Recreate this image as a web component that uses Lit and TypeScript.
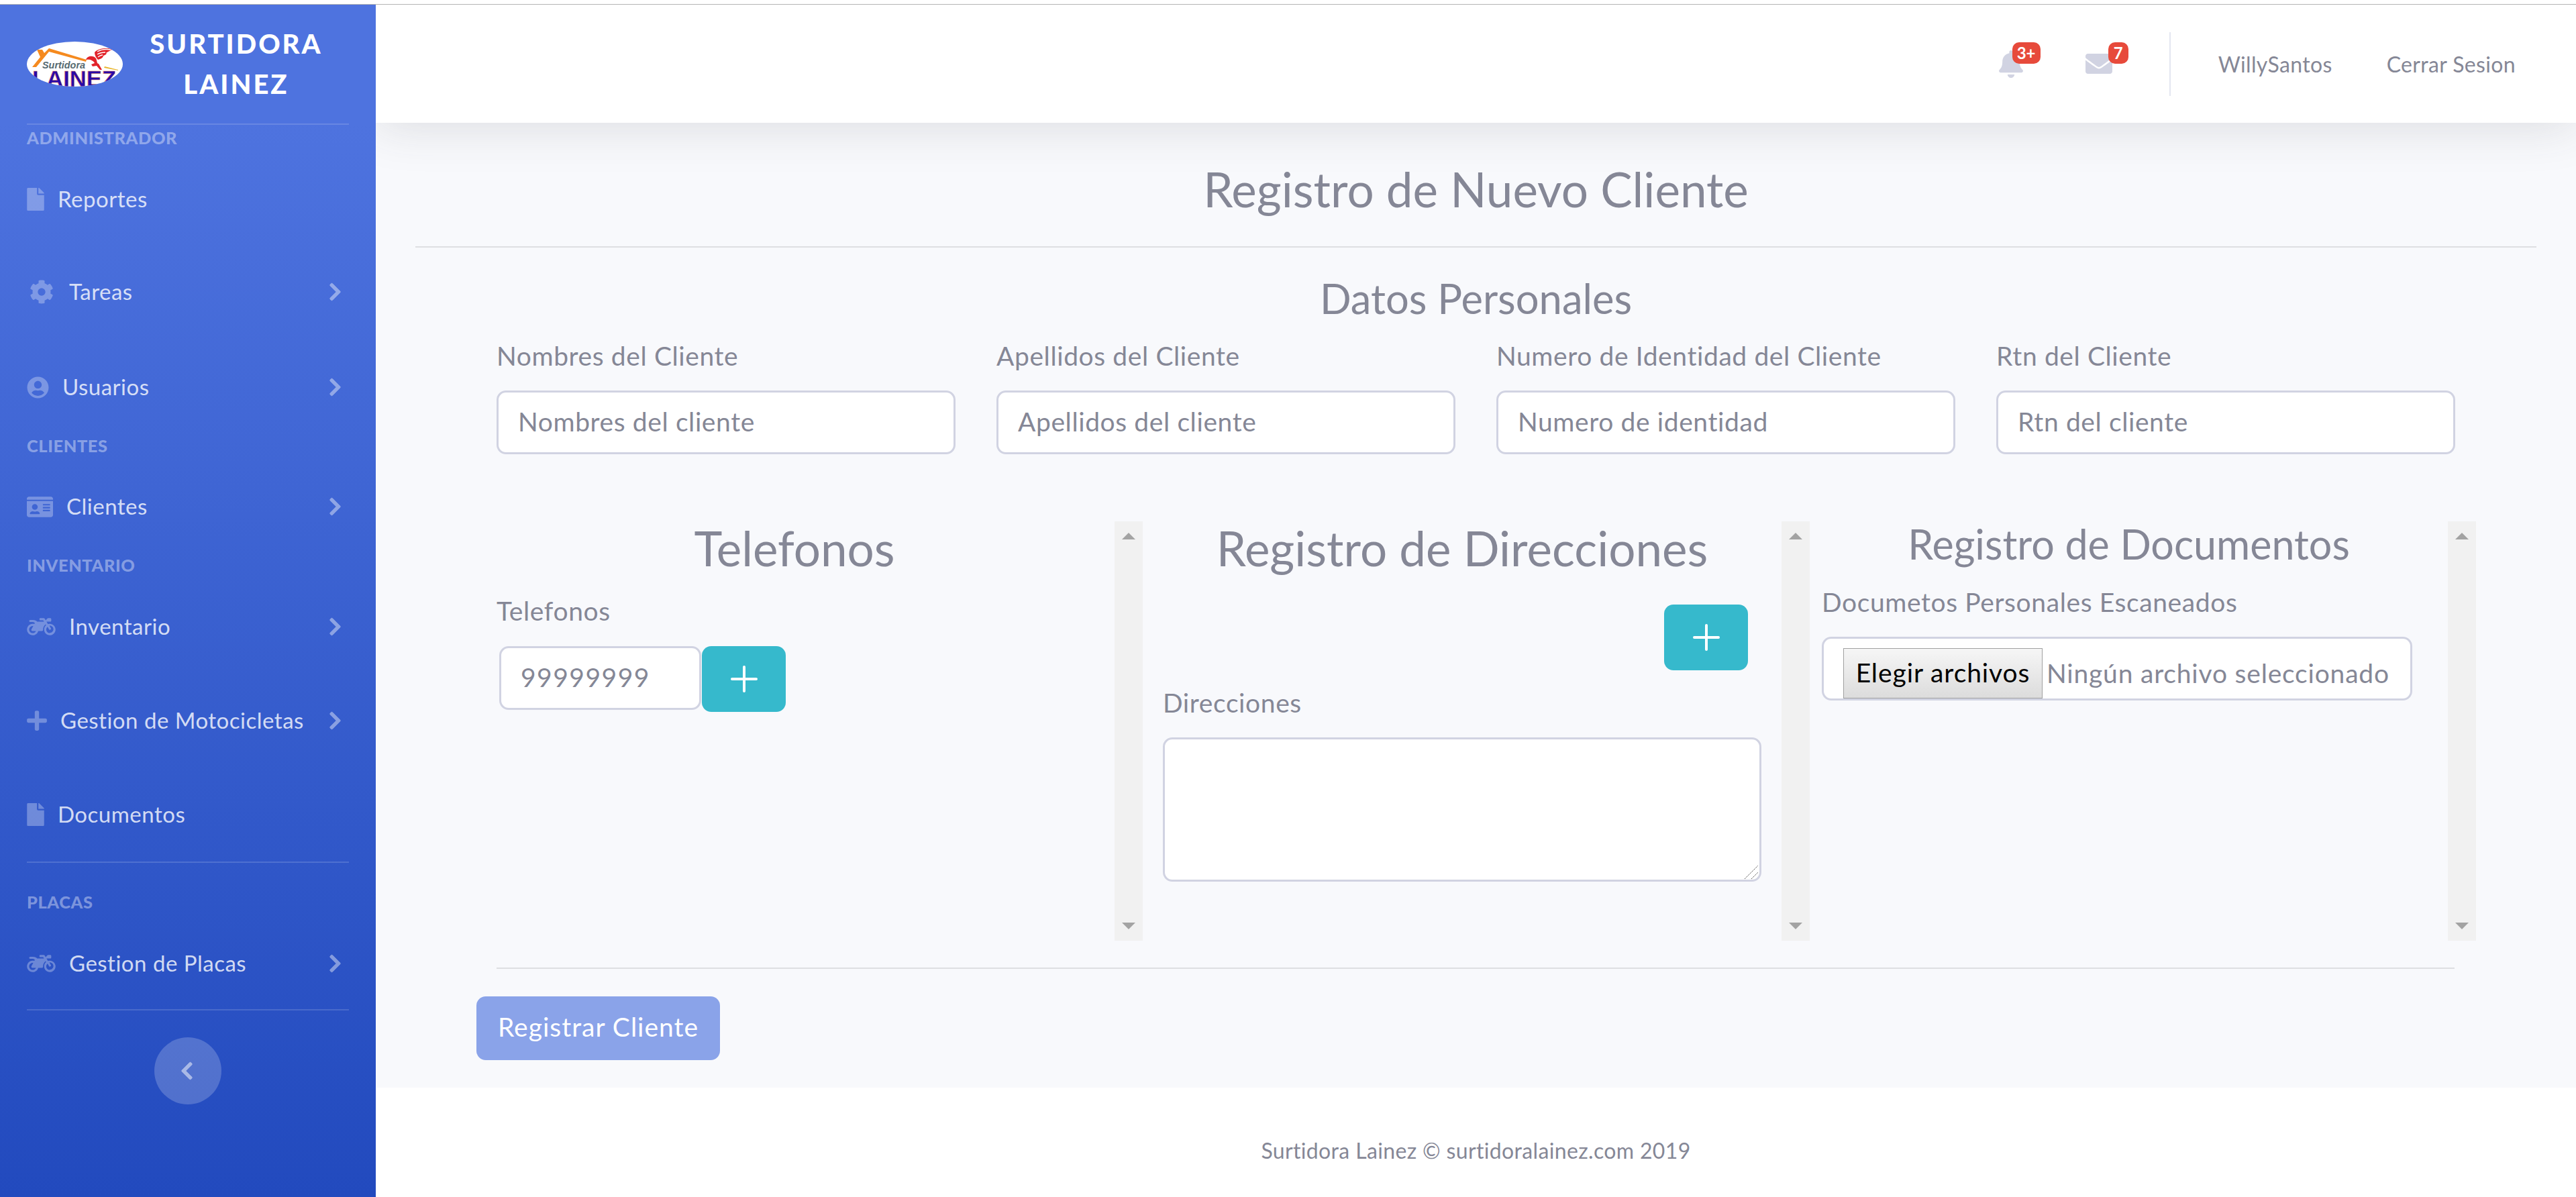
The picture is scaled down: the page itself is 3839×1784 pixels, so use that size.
import { LitElement, css, html, svg } from 'lit'
import { customElement } from 'lit/decorators.js'

const ICONS: Record<string, { box: string; d: string }> = {
	file: { box: '0 0 384 512', d: 'M224 136V0H24C10.7 0 0 10.7 0 24v464c0 13.3 10.7 24 24 24h336c13.3 0 24-10.7 24-24V160H248c-13.2 0-24-10.8-24-24zm160-14.1v6.1H256V0h6.1c6.4 0 12.5 2.5 17 7l97.9 98c4.5 4.5 7 10.6 7 16.9z' },
	cog: { box: '0 0 512 512', d: 'M487.4 315.7l-42.6-24.6c4.3-23.2 4.3-47 0-70.2l42.6-24.6c4.9-2.8 7.1-8.6 5.5-14-11.1-35.6-30-67.8-54.7-94.6-3.8-4.1-10-5.1-14.8-2.3L380.8 110c-17.9-15.4-38.5-27.3-60.8-35.1V25.8c0-5.6-3.9-10.5-9.4-11.7-36.7-8.2-74.3-7.8-109.2 0-5.5 1.2-9.4 6.1-9.4 11.7V75c-22.2 7.9-42.8 19.8-60.8 35.1L88.7 85.5c-4.9-2.8-11-1.9-14.8 2.3-24.7 26.7-43.6 58.9-54.7 94.6-1.7 5.4.6 11.2 5.5 14L67.3 221c-4.3 23.2-4.3 47 0 70.2l-42.6 24.6c-4.9 2.8-7.1 8.6-5.5 14 11.1 35.6 30 67.8 54.7 94.6 3.8 4.1 10 5.1 14.8 2.3l42.6-24.6c17.9 15.4 38.5 27.3 60.8 35.1v49.2c0 5.6 3.9 10.5 9.4 11.7 36.7 8.2 74.3 7.8 109.2 0 5.5-1.2 9.4-6.1 9.4-11.7v-49.2c22.2-7.9 42.8-19.8 60.8-35.1l42.6 24.6c4.9 2.8 11 1.9 14.8-2.3 24.7-26.7 43.6-58.9 54.7-94.6 1.5-5.5-.7-11.3-5.6-14.1zM256 336c-44.1 0-80-35.9-80-80s35.9-80 80-80 80 35.9 80 80-35.9 80-80 80z' },
	user: { box: '0 0 496 512', d: 'M248 8C111 8 0 119 0 256s111 248 248 248 248-111 248-248S385 8 248 8zm0 96c48.6 0 88 39.4 88 88s-39.4 88-88 88-88-39.4-88-88 39.4-88 88-88zm0 344c-58.7 0-111.3-26.6-146.5-68.2 18.8-35.4 55.6-59.8 98.5-59.8 2.4 0 4.8.4 7.1 1.1 13 4.2 26.6 6.9 40.9 6.9 14.3 0 28-2.7 40.9-6.9 2.3-.7 4.7-1.1 7.1-1.1 42.9 0 79.7 24.4 98.5 59.8C359.3 421.4 306.7 448 248 448z' },
	card: { box: '0 0 576 512', d: 'M528 32H48C21.5 32 0 53.5 0 80v16h576V80c0-26.5-21.5-48-48-48zM0 432c0 26.5 21.5 48 48 48h480c26.5 0 48-21.5 48-48V128H0v304zm352-232c0-4.4 3.6-8 8-8h144c4.4 0 8 3.6 8 8v16c0 4.4-3.6 8-8 8H360c-4.4 0-8-3.6-8-8v-16zm0 64c0-4.4 3.6-8 8-8h144c4.4 0 8 3.6 8 8v16c0 4.4-3.6 8-8 8H360c-4.4 0-8-3.6-8-8v-16zm0 64c0-4.4 3.6-8 8-8h144c4.4 0 8 3.6 8 8v16c0 4.4-3.6 8-8 8H360c-4.4 0-8-3.6-8-8v-16zM176 192c35.3 0 64 28.7 64 64s-28.7 64-64 64-64-28.7-64-64 28.7-64 64-64zM67.1 396.2C75.5 370.5 99.6 352 128 352h8.2c12.3 5.1 25.7 8 39.8 8s27.6-2.9 39.8-8h8.2c28.4 0 52.5 18.5 60.9 44.2 3.2 9.9-5.2 19.8-15.6 19.8H82.7c-10.4 0-18.8-10-15.6-19.8z' },
	plus: { box: '0 0 448 512', d: 'M416 208H272V64c0-17.67-14.33-32-32-32h-32c-17.67 0-32 14.33-32 32v144H32c-17.67 0-32 14.33-32 32v32c0 17.67 14.33 32 32 32h144v144c0 17.67 14.33 32 32 32h32c17.67 0 32-14.33 32-32V304h144c17.67 0 32-14.33 32-32v-32c0-17.67-14.33-32-32-32z' },
	moto: { box: '0 0 640 512', d: 'M512.9 192c-14.9-.1-29.1 2.3-42.4 6.9L437.6 144H520c13.3 0 24-10.7 24-24V88c0-13.3-10.7-24-24-24h-45.3c-6.8 0-13.3 2.9-17.8 7.9l-37.5 41.7-22.8-38C392.2 68.4 384.4 64 376 64h-80c-8.8 0-16 7.2-16 16v16c0 8.8 7.2 16 16 16h66.4l19.2 32H227.9c-17.7-23.1-44.9-40-99.9-40H72.5C59 104 47.7 115 48 128.5c.2 13 10.9 23.5 24 23.5h56c24.5 0 38.7 10.9 47.8 24.8l-11.3 20.5c-13-3.9-26.9-5.7-41.3-5.2C55.9 194.5 1.6 249.6 0 317c-1.6 72.1 56.3 131 128 131 59.6 0 109.7-40.8 124-96h84.2c13.7 0 24.6-11.4 24-25.1-2.1-47.1 17.5-93.7 56.2-125l12.5 20.8c-27.6 23.7-45.1 58.9-44.8 98.2.5 69.6 57.2 126.5 126.8 127.1 71.6.7 129.8-57.5 129.2-129.1-.7-69.5-57.6-126.4-127.1-127.9zM128 400c-44.1 0-80-35.9-80-80s35.9-80 80-80c4.2 0 8.4.3 12.5 1L99 316.4c-8.8 16 2.8 35.6 21 35.6h81.3c-12.4 28.2-40.6 48-73.3 48zm384 0c-44.1 0-80-35.9-80-80 0-24.7 11.3-46.8 28.9-61.5l36.3 60.6c4.5 7.6 14.3 10 21.9 5.5l13.7-8.2c7.6-4.5 10-14.3 5.5-21.9l-36.4-60.6c3.6-.5 7.3-.8 11-.8 44.1 0 80 35.9 80 80s-35.9 80-80 80z' },
	chevron: { box: '0 0 320 512', d: 'M285.476 272.971L91.132 467.314c-9.373 9.373-24.569 9.373-33.941 0l-22.667-22.667c-9.357-9.357-9.375-24.522-.04-33.901L188.505 256 34.484 101.255c-9.335-9.379-9.317-24.544.04-33.901l22.667-22.667c9.373-9.373 24.569-9.373 33.941 0L285.475 239.03c9.373 9.372 9.373 24.568.001 33.941z' },
	bell: { box: '0 0 448 512', d: 'M224 512c35.32 0 63.97-28.65 63.97-64H160.03c0 35.35 28.65 64 63.97 64zm215.39-149.71c-19.32-20.76-55.47-51.99-55.47-154.29 0-77.7-54.48-139.9-127.94-155.16V32c0-17.67-14.32-32-31.98-32s-31.98 14.33-31.98 32v20.84C118.56 68.1 64.08 130.3 64.08 208c0 102.3-36.15 133.53-55.47 154.29-6 6.45-8.66 14.16-8.61 21.71.11 16.4 12.98 32 32.1 32h383.8c19.12 0 32-15.6 32.1-32 .05-7.55-2.61-15.27-8.61-21.71z' },
	mail: { box: '0 0 512 512', d: 'M502.3 190.8c3.9-3.1 9.7-.2 9.7 4.7V400c0 26.5-21.5 48-48 48H48c-26.5 0-48-21.5-48-48V195.6c0-5 5.7-7.8 9.7-4.7 22.4 17.4 52.1 39.5 154.1 113.6 21.1 15.4 56.7 47.8 92.2 47.6 35.7.3 71.3-32.8 92.3-47.6 102-74.1 131.6-96.3 154-113.7zM256 320c23.2.4 56.6-29.2 73.4-41.4 132.7-96.3 142.8-104.7 173.4-128.7 5.8-4.5 9.2-11.5 9.2-18.9v-19c0-26.5-21.5-48-48-48H48C21.5 64 0 85.5 0 112v19c0 7.4 3.4 14.3 9.2 18.9 30.6 23.9 40.7 32.4 173.4 128.7 16.8 12.2 50.2 41.8 73.4 41.4z' },
}

const icon = (name: string, cls = '') => html`<svg class="ic ${name} ${cls}" viewBox=${ICONS[name].box}><path d=${ICONS[name].d}></path></svg>`

const plusBtn = svg`<svg class="plus-mark" viewBox="0 0 40 40"><path d="M20 2v36M2 20h36"></path></svg>`

// sidebar rows, in order. gap is the small leftover space above the row
const NAV = [
	{ head: 'ADMINISTRADOR', gap: 1 },
	{ ic: 'file', label: 'Reportes', gap: 6 },
	{ ic: 'cog', label: 'Tareas', more: true, gap: 2 },
	{ ic: 'user', label: 'Usuarios', more: true, gap: 6 },
	{ head: 'CLIENTES', gap: 1 },
	{ ic: 'card', label: 'Clientes', more: true, gap: 5 },
	{ head: 'INVENTARIO', gap: 1 },
	{ ic: 'moto', label: 'Inventario', more: true, gap: 6 },
	{ ic: 'plus', label: 'Gestion de Motocicletas', more: true, gap: 4 },
	{ ic: 'file', label: 'Documentos', gap: 4 },
]

@customElement('app-root')
export class AppRoot extends LitElement {
	private _row(r: any) {
		if (r.head) return html`<div class="side-head" style="margin-top:${r.gap}px">${r.head}</div>`
		return html`
			<div class="nav" style="margin-top:${r.gap}px">
				${icon(r.ic)}
				<span>${r.label}</span>
				${r.more ? icon('chevron', 'more') : ''}
			</div>
		`
	}

	private _logo() {
		return html`
			<svg class="logo" viewBox="0 0 143 80">
				<defs><clipPath id="oval"><ellipse cx="71.5" cy="33.5" rx="71.5" ry="33.5"></ellipse></clipPath></defs>
				<ellipse cx="71.5" cy="33.5" rx="71.5" ry="33.5" fill="#fff"></ellipse>
				<g clip-path="url(#oval)">
					<path d="M8 38 L20 23 L15 12 L23 12 L26 17 L33 10 L89 27 L88 30 L33 15 L14 38Z" fill="#f58a1f"></path>
					<path d="M116 37 L136 42 L136 43 L115 39Z" fill="#e8b52c"></path>
					<path d="M101 16 C106 10 118 9 128 11 C124 14 120 15 118 17 C120 17 118 20 114 21 C114 24 110 26 106 27 C103 24 101 20 101 16Z" fill="#e2232a"></path>
					<path d="M105 15 C110 12 118 11 125 12 M105 19 C110 16 114 16 117 16 M106 23 C109 21 111 20 113 20" stroke="#fff" stroke-width="1.4" fill="none"></path>
					<path d="M88 27 C90 21 99 20 103 25 C105 29 104 33 107 33 L112 42 L109 42 L104 36 L98 37 L96 34 L101 32 C99 28 94 26 88 27Z" fill="#e2232a"></path>
					<text class="logo-small" x="23" y="40" textLength="64" lengthAdjust="spacingAndGlyphs">Surtidora</text>
					<text class="logo-big" x="8" y="67" textLength="125" lengthAdjust="spacingAndGlyphs">LAINEZ</text>
				</g>
			</svg>
		`
	}

	render() {
		return html`
			<div class="strip"></div>
			<div class="wrap">
				<aside class="side">
					<div class="brand">
						${this._logo()}
						<div class="brand-text">SURTIDORA<br />LAINEZ</div>
					</div>
					<div class="side-hr"></div>
					${NAV.map((r) => this._row(r))}
					<div class="side-hr mt2"></div>
					<div class="side-head mt40">PLACAS</div>
					<div class="nav mt6">${icon('moto')}<span>Gestion de Placas</span>${icon('chevron', 'more')}</div>
					<div class="side-hr"></div>
					<div class="toggle">${icon('chevron', 'flip')}</div>
				</aside>

				<div class="main">
					<header class="top">
						<div class="alert">${icon('bell')}<span class="badge wide">3+</span></div>
						<div class="alert mail-wrap">${icon('mail')}<span class="badge">7</span></div>
						<div class="top-div"></div>
						<span class="top-link willy">WillySantos</span>
						<span class="top-link cerrar">Cerrar Sesion</span>
					</header>

					<section class="content">
						<h2 class="title">Registro de Nuevo Cliente</h2>
						<hr class="rule" />
						<h3 class="sub">Datos Personales</h3>

						<div class="fields">
							<div>
								<label>Nombres del Cliente</label>
								<input class="ctl" placeholder="Nombres del cliente" />
							</div>
							<div>
								<label>Apellidos del Cliente</label>
								<input class="ctl" placeholder="Apellidos del cliente" />
							</div>
							<div>
								<label>Numero de Identidad del Cliente</label>
								<input class="ctl" placeholder="Numero de identidad" />
							</div>
							<div>
								<label>Rtn del Cliente</label>
								<input class="ctl" placeholder="Rtn del cliente" />
							</div>
						</div>

						<div class="panels">
							<div class="panel">
								<div class="panel-body p1">
									<h3 class="panel-title">Telefonos</h3>
									<label class="l1">Telefonos</label>
									<div class="phone">
										<input class="ctl" placeholder="99999999" />
										<button class="add">${plusBtn}</button>
									</div>
								</div>
								<div class="bar"><i class="up"></i><i class="down"></i></div>
							</div>

							<div class="panel">
								<div class="panel-body p2">
									<h3 class="panel-title">Registro de Direcciones</h3>
									<div class="add-row"><button class="add">${plusBtn}</button></div>
									<label class="l2">Direcciones</label>
									<div class="area-wrap">
										<textarea class="ctl area"></textarea>
										<svg class="grip" viewBox="0 0 20 20"><path d="M0 20 L20 0 M10 20 L20 10"></path></svg>
									</div>
								</div>
								<div class="bar"><i class="up"></i><i class="down"></i></div>
							</div>

							<div class="panel">
								<div class="panel-body p3">
									<h3 class="panel-title small">Registro de Documentos</h3>
									<label class="l3">Documetos Personales Escaneados</label>
									<div class="filebox">
										<span class="filebtn">Elegir archivos</span>
										<span class="filename">Ningún archivo seleccionado</span>
									</div>
								</div>
								<div class="bar"><i class="up"></i><i class="down"></i></div>
							</div>
						</div>

						<hr class="rule end" />
						<button class="submit">Registrar Cliente</button>
					</section>

					<footer class="foot">Surtidora Lainez © surtidoralainez.com 2019</footer>
				</div>
			</div>
		`
	}

	static styles = css`
		:host {
			display: block;
			width: 3839px;
			height: 1784px;
			overflow: hidden;
			background: #fff;
			font-family: 'Lato', 'Noto Sans', sans-serif;
			font-size: 39px;
			letter-spacing: 0.6px;
			color: #858796;
		}
		* { box-sizing: border-box; }
		.strip { height: 7px; border-bottom: 1px solid #b4b4b4; background: #fff; }
		.wrap { display: flex; height: 1777px; }

		/* sidebar */
		.side {
			width: 560px;
			flex: none;
			display: flex;
			flex-direction: column;
			background: linear-gradient(180deg, #4e73df 10%, #224abe 100%);
			color: rgba(255, 255, 255, 0.8);
		}
		.brand { height: 177px; display: flex; align-items: flex-start; padding: 0 0 0 40px; }
		.logo { width: 143px; height: 80px; margin-top: 55px; flex: none; }
		.logo-small { font: italic 700 14.5px 'Liberation Sans', sans-serif; fill: #566a70; letter-spacing: 0; }
		.logo-big { font: 700 34px 'Liberation Sans', sans-serif; fill: #2a0aa8; stroke: #e98a4a; stroke-width: 0.5px; letter-spacing: 0; }
		.brand-text {
			margin: 28px 0 0 24px;
			width: 290px;
			text-align: center;
			font-weight: 900;
			font-size: 40px;
			line-height: 60px;
			letter-spacing: 3px;
			color: #fff;
		}
		.side-hr { height: 2px; margin: 0 40px; background: rgba(255, 255, 255, 0.15); flex: none; }
		.side-hr.mt2 { margin-top: 2px; }
		.side-head {
			height: 36px;
			line-height: 36px;
			padding-left: 40px;
			font-size: 25.4px;
			font-weight: 900;
			color: rgba(255, 255, 255, 0.4);
			flex: none;
		}
		.mt40 { margin-top: 40px; }
		.nav {
			height: 136px;
			flex: none;
			display: flex;
			align-items: center;
			gap: 20px;
			padding: 0 51px 0 40px;
			font-size: 33px;
			letter-spacing: 0.5px;
		}
		.nav span { margin-bottom: 3px; }
		.mt6 { margin-top: 6px; }
		.ic { fill: currentColor; flex: none; display: block; }
		.nav .ic { color: rgba(255, 255, 255, 0.3); }
		.file { height: 34px; width: 26px; }
		.cog { height: 36px; width: 36px; margin: 0 3px 0 4px; }
		.user { height: 33px; width: 33px; }
		.card { height: 35px; width: 39px; }
		.plus { height: 34px; width: 30px; }
		.moto { height: 34px; width: 43px; }
		.nav .more { height: 30px; width: 19px; margin-left: auto; color: #fff; opacity: 0.42; stroke: #fff; stroke-width: 14px; }
		.toggle {
			width: 100px;
			height: 100px;
			margin: 40px auto 0;
			border-radius: 50%;
			background: rgba(255, 255, 255, 0.2);
			display: flex;
			align-items: center;
			justify-content: center;
			color: #fff;
		}
		.flip { height: 30px; width: 19px; transform: scaleX(-1); margin-left: -4px; opacity: 0.5; stroke: #fff; stroke-width: 14px; }

		/* right side */
		.main { flex: 1; min-width: 0; display: flex; flex-direction: column; background: #f8f9fc; overflow: hidden; }
		.top {
			height: 176px;
			flex: none;
			display: flex;
			align-items: center;
			justify-content: flex-end;
			padding-right: 90px;
			background: #fff;
			box-shadow: 0 6px 71px rgba(58, 59, 69, 0.15);
			position: relative;
			z-index: 1;
		}
		.alert { position: relative; color: #d1d3e2; display: flex; }
		.bell { width: 36px; height: 41px; }
		.mail { width: 40px; height: 40px; }
		.mail-wrap { margin-left: 93px; }
		.badge {
			position: absolute;
			top: -12px;
			left: 34px;
			width: 30px;
			height: 32px;
			border-radius: 10px;
			background: #e74a3b;
			color: #fff;
			font-size: 24px;
			font-weight: 700;
			line-height: 32px;
			letter-spacing: 0;
			text-align: center;
		}
		.badge.wide { left: 20px; width: 42px; }
		.top-div { width: 2px; height: 95px; margin-left: 85px; background: #e3e6f0; }
		.top-link { font-size: 32px; white-space: nowrap; letter-spacing: 0.35px; }
		.willy { margin-left: 71px; }
		.cerrar { margin-left: 81px; }

		.content { flex: 1; display: flex; flex-direction: column; padding: 52px 59px 0; }
		h2, h3 { margin: 0; font-weight: 400; letter-spacing: 0; }
		.title { font-size: 71px; line-height: 94px; text-align: center; }
		.rule { border: 0; height: 2px; margin: 38px 0 0; background: rgba(0, 0, 0, 0.1); flex: none; }
		.sub { font-size: 61.5px; line-height: 84px; text-align: center; margin-top: 33px; }

		.fields {
			display: grid;
			grid-template-columns: repeat(4, 684px);
			gap: 61px;
			margin: 20px 0 0 121px;
		}
		label { display: block; height: 48px; line-height: 48px; white-space: nowrap; }
		.ctl {
			display: block;
			width: 100%;
			height: 95px;
			margin: 28px 0 0;
			padding: 0 29px 3px;
			border: 3px solid #d1d3e2;
			border-radius: 14px;
			background: #fff;
			font: inherit;
			letter-spacing: 0.6px;
			color: #6e707e;
			outline: none;
		}
		.ctl::placeholder { color: #858796; opacity: 1; }

		.panels {
			display: grid;
			grid-template-columns: 996px 994px 993px;
			height: 625px;
			margin: 100px 0 0 88px;
		}
		.panel { display: flex; min-width: 0; }
		.panel-body { flex: 1; min-width: 0; }
		.p1 { padding-left: 33px; }
		.p2 { padding-left: 30px; }
		.p3 { padding-left: 18px; }
		.panel-title { font-size: 71px; line-height: 84px; text-align: center; margin-top: -2px; padding-bottom: 2px; }
		.p1 .panel-title { margin-left: -33px; }
		.p2 .panel-title { margin-left: -30px; }
		.p3 .panel-title { margin-left: -18px; line-height: 72px; font-size: 61px; }
		.bar {
			width: 42px;
			flex: none;
			background: #f1f1f1;
			display: flex;
			flex-direction: column;
			justify-content: space-between;
			align-items: center;
			padding: 17px 0;
		}
		.up, .down { width: 0; height: 0; border-left: 10px solid transparent; border-right: 10px solid transparent; }
		.up { border-bottom: 10px solid #a3a3a3; }
		.down { border-top: 10px solid #a3a3a3; }

		.l1 { margin-top: 25px; }
		.phone { display: flex; align-items: flex-start; margin: 29px 0 0 4px; }
		.phone .ctl { width: 301px; margin: 0; letter-spacing: 1.5px; }
		.add {
			width: 125px;
			height: 98px;
			flex: none;
			margin-left: 1px;
			border: 0;
			border-radius: 14px;
			background: #36b9cc;
			display: flex;
			align-items: center;
			justify-content: center;
			padding: 0;
		}
		.plus-mark { width: 40px; height: 40px; fill: none; stroke: #fff; stroke-width: 4; stroke-linecap: round; }
		.add-row { display: flex; justify-content: flex-end; margin: 40px 50px 0 0; }
		.l2 { margin-top: 24px; }
		.area-wrap { position: relative; width: 892px; height: 215px; margin-top: 28px; }
		.area { width: 100%; height: 100%; margin: 0; resize: none; }
		.grip { position: absolute; right: 5px; bottom: 4px; width: 20px; height: 20px; fill: none; stroke: #555; stroke-width: 1; stroke-dasharray: 1.4 0.8; }
		.l3 { margin-top: 24px; }
		.filebox {
			display: flex;
			align-items: flex-start;
			width: 880px;
			height: 95px;
			margin-top: 28px;
			padding: 14px 0 0 29px;
			border: 3px solid #d1d3e2;
			border-radius: 14px;
			background: #fff;
		}
		.filebtn {
			width: 297px;
			height: 75px;
			line-height: 71px;
			flex: none;
			text-align: center;
			color: #000;
			letter-spacing: 0.9px;
			border: 1px solid #a0a0a0;
			background: linear-gradient(180deg, #f6f6f6, #dcdcdc);
		}
		.filename { margin-left: 6px; line-height: 75px; white-space: nowrap; letter-spacing: 0.8px; }

		.rule.end { margin: 40px 122px 0 121px; }
		.submit {
			width: 363px;
			height: 95px;
			flex: none;
			margin: 41px 0 0 91px;
			padding: 0 0 6px;
			border: 0;
			border-radius: 14px;
			background: #8aa3e9;
			color: #fff;
			font: inherit;
			letter-spacing: 1px;
		}
		.foot {
			height: 163px;
			flex: none;
			padding-top: 70px;
			background: #fff;
			font-size: 32px;
			line-height: 48px;
			letter-spacing: 0.35px;
			text-align: center;
		}
	`
}

declare global {
	interface HTMLElementTagNameMap {
		'app-root': AppRoot
	}
}
